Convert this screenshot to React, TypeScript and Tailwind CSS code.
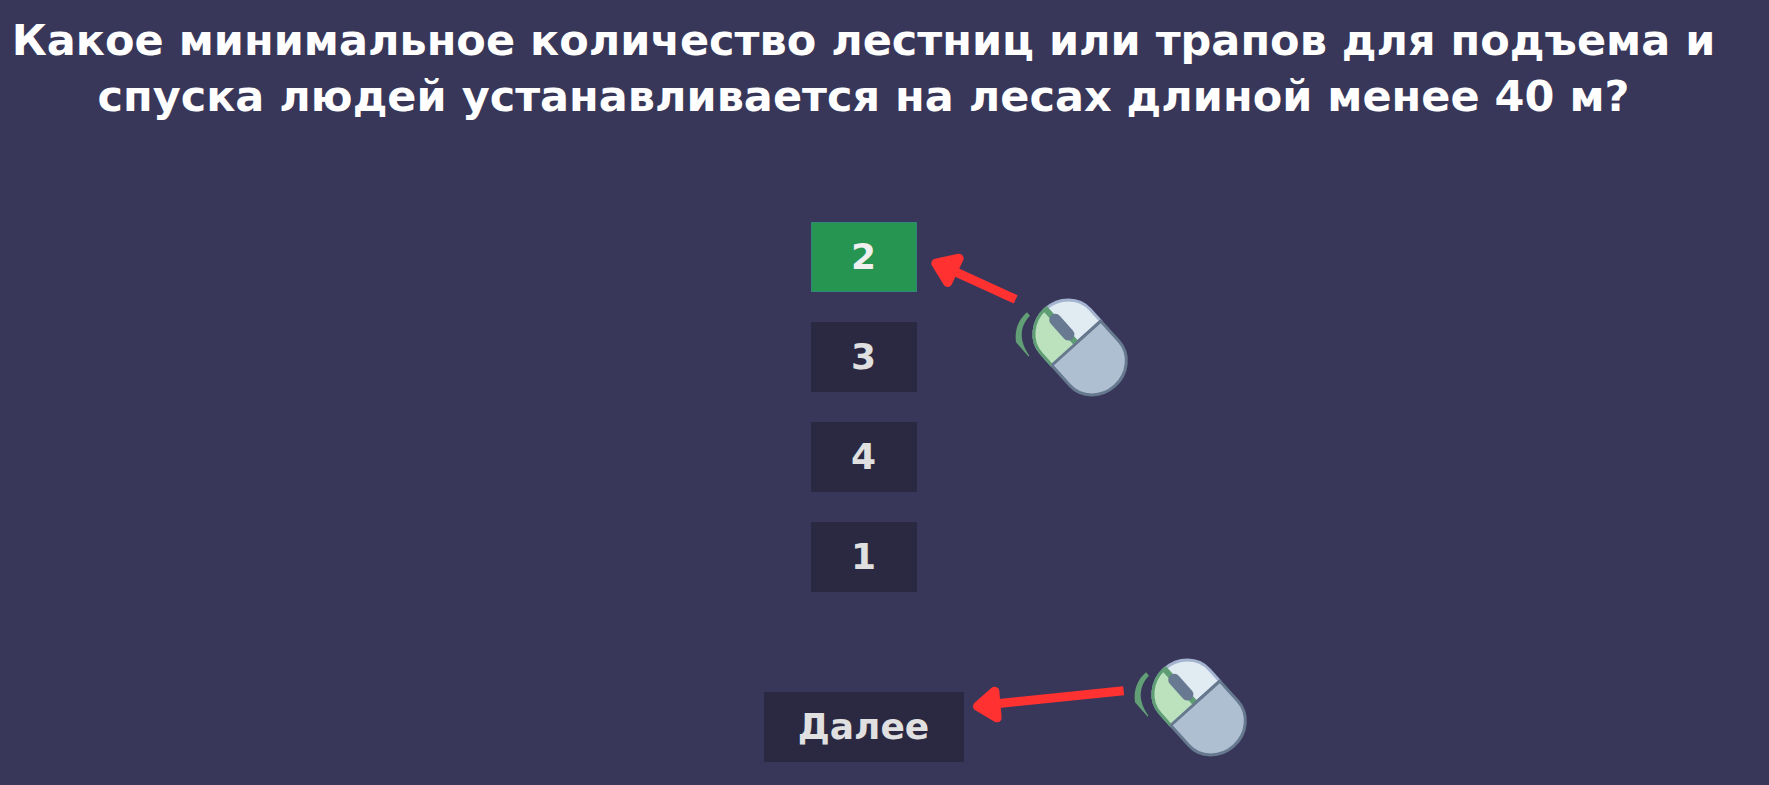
function Mouse({ className }: { className: string }) {
  return (
    <svg viewBox="0 0 420 390" className={className} aria-hidden="true">
      <path d="M81 97 L90 107 C70 127 61 153 67 182 C71 200 80 215 88 227 L86 230 L48 187 C43 151 55 119 81 97Z" fill="#629f76" />
      <g transform="translate(240 202) rotate(-42)">
        <path d="M-99 -17 V-64 A99 91 0 0 1 0 -155 A99 91 0 0 1 99 -64 V-17Z" fill="#e1ebf2" stroke="#a4b3cf" strokeWidth="9" />
        <path d="M-99 -17 V65 A99 91 0 0 0 99 65 V-17Z" fill="#afbfd2" stroke="#66798f" strokeWidth="9" />
        <path d="M-99 -17 V-64 A99 91 0 0 1 0 -155 V-17Z" fill="#bbe1bd" />
        <path d="M-99 -17 V-64 A99 91 0 0 1 0 -155" fill="none" stroke="#5f9d75" strokeWidth="9" />
        <path d="M0 -159 V-17" stroke="#5f9d75" strokeWidth="18" />
        <path d="M-99 -17 H99" stroke="#66798f" strokeWidth="8" />
        <rect x="-18" y="-129" width="36" height="95" rx="18" fill="#687a91" />
      </g>
    </svg>
  );
}

function AnswerPointer() {
  return (
    <svg viewBox="0 0 270 160" className="mt-[30px] h-[54px] w-[90px] shrink-0" aria-hidden="true">
      <path d="M73 57 L257 141" stroke="#ff3131" strokeWidth="27" />
      <path d="M18 33 L87 18 L53 90Z" fill="#ff3131" stroke="#ff3131" strokeWidth="28" strokeLinejoin="round" />
    </svg>
  );
}

function NextPointer() {
  return (
    <svg viewBox="0 0 480 120" className="-mt-[9px] h-[40px] w-[160px] shrink-0" aria-hidden="true">
      <path d="M80 63 L467 23" stroke="#ff3131" strokeWidth="27" />
      <path d="M29 70 L80 25 L87 104Z" fill="#ff3131" stroke="#ff3131" strokeWidth="28" strokeLinejoin="round" />
    </svg>
  );
}

const answers = ["2", "3", "4", "1"];

export default function App() {
  return (
    <main className="flex min-h-screen flex-col items-center gap-[98px] overflow-hidden bg-[#383759] py-3 pr-[42px] font-['DejaVu_Sans',sans-serif] font-bold text-white">
      <h1 className="text-center text-[43px] leading-[56px]">
        Какое минимальное количество лестниц или трапов для подъема и спуска людей устанавливается на лесах длиной менее 40 м?
      </h1>
      <div className="flex flex-col items-center gap-[100px]">
        <div className="flex flex-col gap-[30px]">
          {answers.map((answer, index) => (
            <div key={answer} className="relative">
              <button
                type="button"
                className={
                  index === 0
                    ? "h-[70px] w-[106px] border border-[#30877a] bg-[#259551] text-4xl text-[#efefef]"
                    : "h-[70px] w-[106px] bg-[#2a2941] text-4xl text-[#e0e0e0]"
                }
              >
                {answer}
              </button>
              {index === 0 && (
                <div className="pointer-events-none absolute left-full top-0 flex items-start pl-[13px]">
                  <AnswerPointer />
                  <Mouse className="-ml-5 mt-[58px] h-[130px] w-[140px] shrink-0" />
                </div>
              )}
            </div>
          ))}
        </div>
        <div className="relative">
          <button type="button" className="h-[70px] w-[200px] bg-[#2a2941] text-4xl text-[#e0e0e0]">
            Далее
          </button>
          <div className="pointer-events-none absolute left-full top-0 flex items-start pl-1">
            <NextPointer />
            <Mouse className="-ml-[9px] -mt-[52px] h-[130px] w-[140px] shrink-0" />
          </div>
        </div>
      </div>
    </main>
  );
}
